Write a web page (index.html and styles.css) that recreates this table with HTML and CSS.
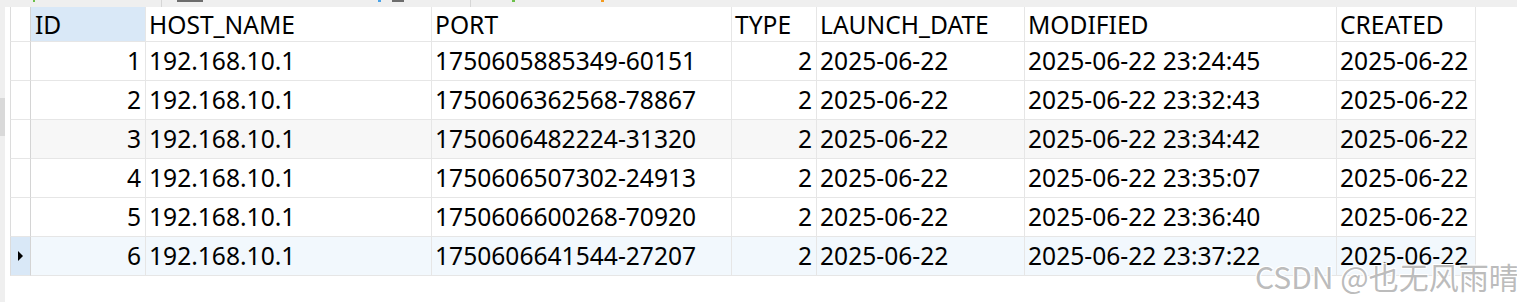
FILE: index.html
```html
<!DOCTYPE html>
<html>
<head>
<meta charset="utf-8">
<link rel="stylesheet" href="styles.css">
</head>
<body>
<div class="topbar">
  <span class="mark m-green m1"></span>
  <span class="sep s1"></span>
  <span class="mark m-gray m2"></span>
  <span class="mark m-blue m3"></span>
  <span class="mark m-gray m4"></span>
  <span class="sep s2"></span>
  <span class="mark m-green m5"></span>
  <span class="mark m-orange m6"></span>
</div>
<div class="main">
  <div class="leftbar"><div class="thumb"></div></div>
  <div class="grid">
    <div class="row head">
      <div class="rh"></div>
      <div class="c sel">ID</div>
      <div class="c">HOST_NAME</div>
      <div class="c">PORT</div>
      <div class="c">TYPE</div>
      <div class="c">LAUNCH_DATE</div>
      <div class="c">MODIFIED</div>
      <div class="c">CREATED</div>
    </div>
    <div class="row">
      <div class="rh"></div>
      <div class="c num">1</div><div class="c">192.168.10.1</div><div class="c">1750605885349-60151</div><div class="c num">2</div><div class="c">2025-06-22</div><div class="c">2025-06-22 23:24:45</div><div class="c">2025-06-22</div>
    </div>
    <div class="row">
      <div class="rh"></div>
      <div class="c num">2</div><div class="c">192.168.10.1</div><div class="c">1750606362568-78867</div><div class="c num">2</div><div class="c">2025-06-22</div><div class="c">2025-06-22 23:32:43</div><div class="c">2025-06-22</div>
    </div>
    <div class="row alt">
      <div class="rh"></div>
      <div class="c num">3</div><div class="c">192.168.10.1</div><div class="c">1750606482224-31320</div><div class="c num">2</div><div class="c">2025-06-22</div><div class="c">2025-06-22 23:34:42</div><div class="c">2025-06-22</div>
    </div>
    <div class="row">
      <div class="rh"></div>
      <div class="c num">4</div><div class="c">192.168.10.1</div><div class="c">1750606507302-24913</div><div class="c num">2</div><div class="c">2025-06-22</div><div class="c">2025-06-22 23:35:07</div><div class="c">2025-06-22</div>
    </div>
    <div class="row">
      <div class="rh"></div>
      <div class="c num">5</div><div class="c">192.168.10.1</div><div class="c">1750606600268-70920</div><div class="c num">2</div><div class="c">2025-06-22</div><div class="c">2025-06-22 23:36:40</div><div class="c">2025-06-22</div>
    </div>
    <div class="row cur">
      <div class="rh"><span class="tri"></span></div>
      <div class="c num">6</div><div class="c">192.168.10.1</div><div class="c">1750606641544-27207</div><div class="c num">2</div><div class="c">2025-06-22</div><div class="c">2025-06-22 23:37:22</div><div class="c">2025-06-22</div>
    </div>
  </div>
</div>
<div class="watermark">CSDN @也无风雨晴</div>
</body>
</html>
```
FILE: styles.css
```css
html, body {
  margin: 0;
  padding: 0;
  background: #ffffff;
  width: 1517px;
  height: 302px;
  overflow: hidden;
  font-family: "Noto Sans", "Open Sans", sans-serif;
  color: #000;
}
.topbar {
  position: relative;
  height: 7px;
  background: #efefef;
}
.mark {
  position: absolute;
  top: 0;
  height: 2px;
}
.m-green { background: #6cc04a; }
.m-gray { background: #6d6d6d; }
.m-blue { background: #4aa3e8; }
.m-orange { background: #f39a1e; }
.m1 { left: 33px; width: 2px; }
.m2 { left: 177px; width: 26px; }
.m3 { left: 378px; width: 3px; }
.m4 { left: 392px; width: 12px; }
.m5 { left: 512px; width: 3px; }
.m6 { left: 601px; width: 3px; }
.sep {
  position: absolute;
  top: 0;
  width: 1px;
  height: 7px;
  background: #d6d6d6;
}
.s1 { left: 161px; }
.s2 { left: 470px; }
.main {
  display: flex;
  height: 295px;
}
.leftbar {
  width: 5px;
  background: #efefef;
  padding-top: 91px;
  margin-right: 5px;
  box-sizing: border-box;
}
.thumb {
  height: 38px;
  background: #d9d9d9;
}
.grid {
  display: flex;
  flex-direction: column;
  align-self: flex-start;
}
.row {
  display: grid;
  grid-template-columns: 21px 115px 286px 300px 85px 208px 312px 139px;
  height: 39px;
  font-size: 24.6px;
  line-height: 38px;
}
.row.head {
  height: 35px;
  line-height: 35px;
}
.c, .rh {
  border-right: 1px solid #e6e6e6;
  border-bottom: 1px solid #e6e6e6;
  padding: 0 3px;
  white-space: nowrap;
  overflow: hidden;
  box-sizing: border-box;
}
.rh {
  padding: 0;
  border-left: 1px solid #dcdcdc;
  border-right: 1px solid #d4d4d4;
  display: flex;
  align-items: center;
  justify-content: center;
}
.c.num { text-align: right; padding-right: 4px; }
.c.sel { background: #d9e8f7; padding-left: 4px; }
.row.alt .c { background: #f7f7f7; }
.row.cur .c { background: #f2f8fd; }
.row.cur .rh { background: #d9e8f7; }
.tri {
  width: 0;
  height: 0;
  border-top: 5px solid transparent;
  border-bottom: 5px solid transparent;
  border-left: 5px solid #000;
}
.watermark {
  position: absolute;
  left: 1255px;
  top: 256px;
  font-family: "Noto Sans CJK SC", sans-serif;
  font-size: 30px;
  line-height: 40px;
  color: rgba(170, 170, 170, 0.8);
  text-shadow: 1px 1px 0 #fff, -1px -1px 0 #fff, 1px -1px 0 #fff, -1px 1px 0 #fff;
  white-space: nowrap;
}
```
